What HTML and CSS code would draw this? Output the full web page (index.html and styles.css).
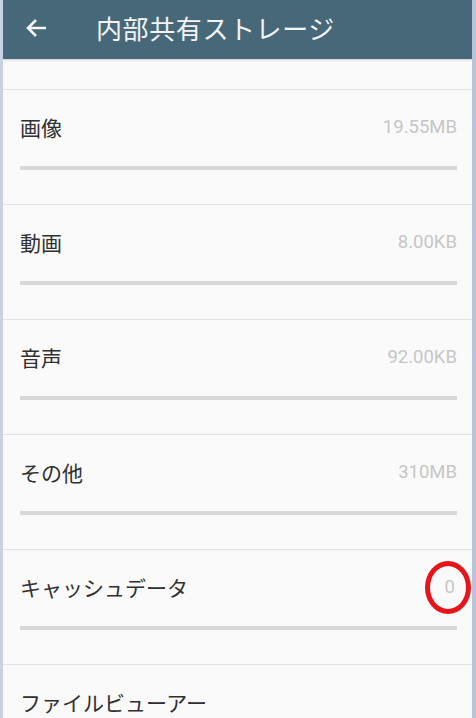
FILE: index.html
```html
<!DOCTYPE html>
<html lang="ja">

<head>
  <meta charset="UTF-8">
  <title>内部共有ストレージ</title>
  <link rel="stylesheet" href="styles.css">
</head>

<body>
  <div class="frame">
    <div class="toolbar">
      <span class="back">
        <svg width="22" height="20" viewBox="0 0 22 20">
          <path d="M21 10H3M11 2L3 10l8 8" fill="none" stroke="#f2f4f5" stroke-width="2.6" />
        </svg>
      </span>
      <h1>内部共有ストレージ</h1>
    </div>

    <div class="spacer"></div>

    <div class="row">
      <div class="line">
        <span class="name">画像</span>
        <span class="size">19.55MB</span>
      </div>
      <div class="bar"></div>
    </div>

    <div class="row">
      <div class="line">
        <span class="name">動画</span>
        <span class="size">8.00KB</span>
      </div>
      <div class="bar"></div>
    </div>

    <div class="row">
      <div class="line">
        <span class="name">音声</span>
        <span class="size">92.00KB</span>
      </div>
      <div class="bar"></div>
    </div>

    <div class="row">
      <div class="line">
        <span class="name">その他</span>
        <span class="size">310MB</span>
      </div>
      <div class="bar"></div>
    </div>

    <div class="row">
      <div class="line">
        <span class="name">キャッシュデータ</span>
        <span class="size marked">0<span class="circle"></span></span>
      </div>
      <div class="bar"></div>
    </div>

    <div class="row">
      <div class="line">
        <span class="name">ファイルビューアー</span>
      </div>
    </div>
  </div>
</body>

</html>
```

FILE: styles.css
```css
body {
  margin: 0;
  background: #fafafa;
  font-family: "Noto Sans CJK JP", "Noto Sans", sans-serif;
  overflow: hidden;
}

.frame {
  height: 718px;
  border-left: 3px solid #c9d2e3;
  border-right: 4px solid #b9c5d9;
  background: #fafafa;
  overflow: hidden;
}

.toolbar {
  height: 59px;
  background: #476878;
  display: flex;
  align-items: center;
  box-shadow: 0 1px 2px rgba(0, 0, 0, 0.2);
  padding-bottom: 4px;
  box-sizing: border-box;
}

.back {
  display: flex;
  margin-left: 22px;
  width: 22px;
}

.toolbar h1 {
  margin: 0 0 0 49px;
  font-size: 26px;
  font-weight: normal;
  color: #f2f4f5;
  letter-spacing: 0.6px;
}

.spacer {
  height: 30px;
  border-bottom: 1px solid #e2e2e2;
}

.row {
  height: 114px;
  padding: 0 15px 0 17px;
  border-bottom: 1px solid #e2e2e2;
}

.line {
  display: flex;
  align-items: center;
  justify-content: space-between;
  padding-top: 23px;
  height: 28px;
}

.name {
  font-size: 21px;
  color: #303030;
}

.size {
  font-family: Roboto, "Liberation Sans", sans-serif;
  font-size: 18.5px;
  color: #c6c6c6;
}

.marked {
  position: relative;
  margin-right: 2px;
}

.circle {
  position: absolute;
  left: -20px;
  top: -15px;
  width: 36px;
  height: 43px;
  border: 5px solid #e8141c;
  border-radius: 50%;
}

.bar {
  margin-top: 25px;
  height: 4px;
  background: #d8d8d8;
}
```
